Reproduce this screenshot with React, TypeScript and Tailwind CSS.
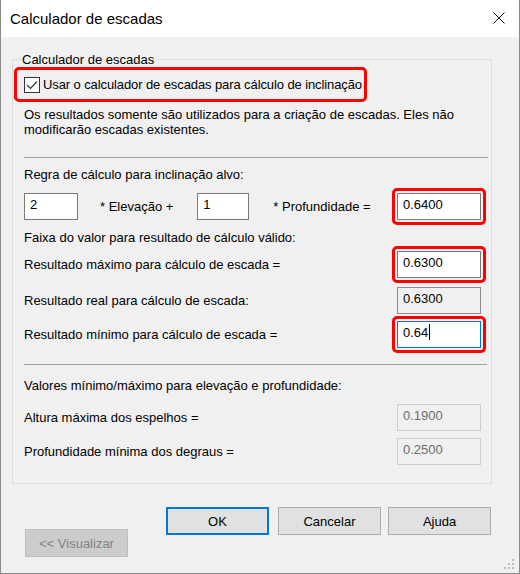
import React from "react";

const font = { fontFamily: '"Liberation Sans", Arial, sans-serif' };

// red highlight around an input
const RedBox = ({ children, className = "" }: { children: React.ReactNode; className?: string }) => (
  <div className={`border-[3px] border-[#ff0000] rounded-[5px] p-[2px] ${className}`}>{children}</div>
);

const Field = ({ value, kind = "normal", w = "w-[84px]", caret = false }: { value: string; kind?: "normal" | "focus" | "readonly" | "disabled"; w?: string; caret?: boolean }) => {
  const styles = {
    normal: "bg-white border-[#7a7a7a] text-black",
    focus: "bg-white border-[#0078d7] text-black",
    readonly: "bg-[#f0f0f0] border-[#8c8c8c] text-black",
    disabled: "bg-[#f0f0f0] border-[#cccccc] text-[#6d6d6d]",
  }[kind];
  return (
    <div className={`${w} h-[27px] border ${styles} pl-[5px] pt-[3px] text-[13px] leading-[15px] flex items-start`}>
      <span>{value}</span>
      {caret && <span className="ml-[1px] w-[1px] h-[16px] bg-black -mt-[1px]" />}
    </div>
  );
};

const Row = ({ label, children, className = "" }: { label: string; children: React.ReactNode; className?: string }) => (
  <div className={`flex items-center justify-between ${className}`}>
    <span>{label}</span>
    {children}
  </div>
);

const Btn = ({ children, className = "" }: { children: React.ReactNode; className?: string }) => (
  <div className={`w-[103px] h-[28px] flex items-center justify-center text-[13px] ${className}`}>{children}</div>
);

export default function App() {
  return (
    <div className="w-[520px] h-[574px] flex flex-col border-x border-b border-[#8a8a8a] bg-[#f0f0f0] text-black" style={font}>
      {/* Title bar */}
      <div className="h-[37px] bg-white flex items-center justify-between pl-[9px] pr-[14px] shrink-0">
        <span className="text-[15px] leading-none -mt-[1px]">Calculador de escadas</span>
        <svg width="12" height="12" viewBox="0 0 12 12" className="-mt-[1px]">
          <path d="M0.5 0.5 L11.5 11.5 M11.5 0.5 L0.5 11.5" stroke="#111" strokeWidth="1" fill="none" />
        </svg>
      </div>

      <div className="flex-1 flex flex-col relative text-[13px] leading-[15px]">
        {/* Group box */}
        <div className="relative mt-[22px] ml-[11px] w-[480px] h-[425px] border border-[#dcdcdc] pl-[11px] pr-[5px]">
          <span className="absolute -top-[8px] left-[8px] px-[1px] bg-[#f0f0f0]">Calculador de escadas</span>

          <div className="-ml-[10px] mt-[7px] w-[353px] h-[35px] border-[3px] border-[#ff0000] rounded-[5px] flex items-center pl-[7px] whitespace-nowrap">
            <div className="w-[16px] h-[16px] shrink-0 border border-[#333] bg-white flex items-center justify-center">
              <svg width="12" height="10" viewBox="0 0 12 10">
                <path d="M1 5 L4.5 8.5 L11 1.5" stroke="#333" strokeWidth="1.2" fill="none" />
              </svg>
            </div>
            <span className="ml-[3px] tracking-[-0.1px]">Usar o calculador de escadas para cálculo de inclinação</span>
          </div>

          <p className="mt-[5px] whitespace-nowrap">
            Os resultados somente são utilizados para a criação de escadas. Eles não
            <br />
            modificarão escadas existentes.
          </p>

          <div className="mt-[20px] h-px w-[464px] bg-[#a0a0a0]" />

          <p className="mt-[9px]">Regra de cálculo para inclinação alvo:</p>

          <div className="mt-[6px] flex items-center h-[37px]">
            <Field value="2" w="w-[54px]" />
            <span className="ml-[22px]">* Elevação +</span>
            <div className="ml-[24px]">
              <Field value="1" w="w-[52px]" />
            </div>
            <span className="ml-[24px]">* Profundidade =</span>
            <RedBox className="ml-auto">
              <Field value="0.6400" />
            </RedBox>
          </div>

          <p className="mt-[5px]">Faixa do valor para resultado de cálculo válido:</p>

          <Row label="Resultado máximo para cálculo de escada =" className="mt-[1px]">
            <RedBox>
              <Field value="0.6300" />
            </RedBox>
          </Row>

          <Row label="Resultado real para cálculo de escada:" className="mt-[4px] pr-[5px]">
            <Field value="0.6300" kind="readonly" />
          </Row>

          <Row label="Resultado mínimo para cálculo de escada =" className="mt-[2px]">
            <RedBox>
              <Field value="0.64" kind="focus" caret />
            </RedBox>
          </Row>

          <div className="mt-[11px] h-px w-[463px] bg-[#a0a0a0]" />

          <p className="mt-[13px]">Valores mínimo/máximo para elevação e profundidade:</p>

          <Row label="Altura máxima dos espelhos =" className="mt-[11px] pr-[5px]">
            <Field value="0.1900" kind="disabled" />
          </Row>

          <Row label="Profundidade mínima dos degraus =" className="mt-[7px] pr-[5px]">
            <Field value="0.2500" kind="disabled" />
          </Row>
        </div>

        {/* Bottom buttons */}
        <div className="flex items-start mt-[23px] pl-[24px]">
          <Btn className="mt-[22px] bg-[#cccccc] border border-[#bfbfbf] text-[#838383]">&lt;&lt; Visualizar</Btn>
          <Btn className="ml-[38px] bg-[#e1e1e1] border-2 border-[#0078d7]">OK</Btn>
          <Btn className="ml-[9px] bg-[#e1e1e1] border border-[#adadad]">Cancelar</Btn>
          <Btn className="ml-[7px] bg-[#e1e1e1] border border-[#adadad]">Ajuda</Btn>
        </div>

        {/* resize grip */}
        <svg width="12" height="12" viewBox="0 0 12 12" className="absolute right-[3px] bottom-[2px]">
          <rect x="8" y="0" width="2" height="2" fill="#bcbcbc" />
          <rect x="4" y="4" width="2" height="2" fill="#bcbcbc" />
          <rect x="8" y="4" width="2" height="2" fill="#bcbcbc" />
          <rect x="0" y="8" width="2" height="2" fill="#bcbcbc" />
          <rect x="4" y="8" width="2" height="2" fill="#bcbcbc" />
          <rect x="8" y="8" width="2" height="2" fill="#bcbcbc" />
        </svg>
      </div>
    </div>
  );
}
